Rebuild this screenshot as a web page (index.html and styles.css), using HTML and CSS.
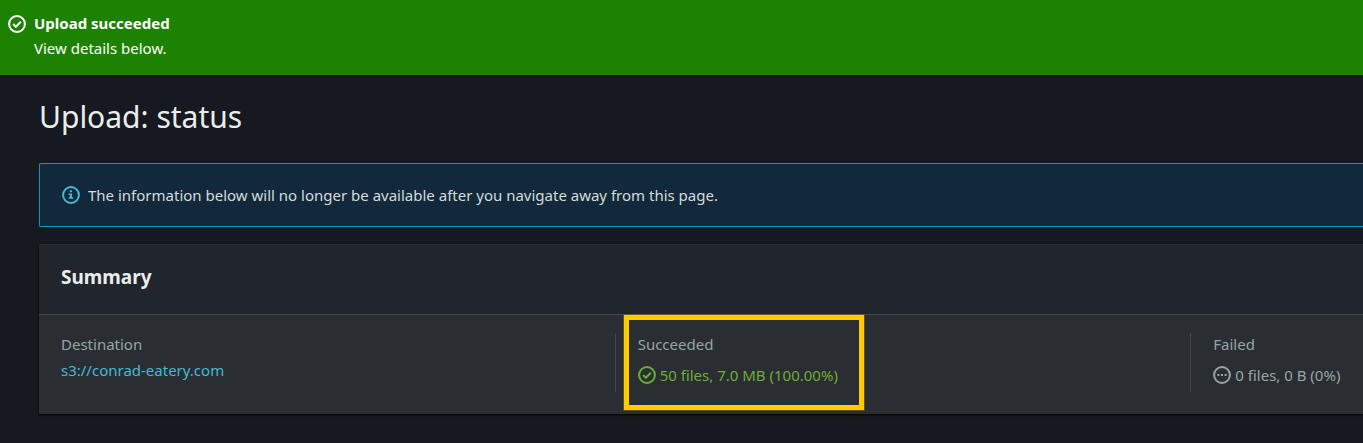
FILE: index.html
```html
<!DOCTYPE html>
<html lang="en">
<head>
<meta charset="utf-8">
<title>Upload: status</title>
<link rel="stylesheet" href="styles.css">
</head>
<body>
<div class="flash" role="status">
  <svg class="icon" viewBox="0 0 18 18" aria-hidden="true"><circle cx="9" cy="9" r="7.9"/><path d="M5.2 9l2.6 2.7 5-5"/></svg>
  <div class="flash-text">
    <strong class="flash-title">Upload succeeded</strong>
    <span>View details below.</span>
  </div>
</div>
<main class="content">
  <h1 class="page-title">Upload: status</h1>
  <div class="notice">
    <svg class="icon" viewBox="0 0 18 18" aria-hidden="true"><circle cx="9" cy="9" r="7.9"/><path class="solid" d="M7.8 4.2h2.2v2H7.8zM6.5 7.4h3.6v3.8h1.2v1.6H6.5v-1.6h1.4V9H6.5z"/></svg>
    <p class="notice-text">The information below will no longer be available after you navigate away from this page.</p>
  </div>
  <section class="panel">
    <header class="panel-header"><h2 class="panel-title">Summary</h2></header>
    <div class="columns">
      <div class="column">
        <div class="label">Destination</div>
        <a class="link" href="#">s3://conrad-eatery.com</a>
      </div>
      <div class="column">
        <div class="label">Succeeded</div>
        <div class="status success">
          <svg class="icon" viewBox="0 0 18 18" aria-hidden="true"><circle cx="9" cy="9" r="7.9"/><path d="M5.2 9l2.6 2.7 5-5"/></svg>
          <span>50 files, 7.0 MB (100.00%)</span>
        </div>
        <div class="highlight"></div>
      </div>
      <div class="column">
        <div class="label">Failed</div>
        <div class="status">
          <svg class="icon" viewBox="0 0 18 18" aria-hidden="true"><circle cx="9" cy="9" r="7.9"/><path class="solid" d="M4.4 8h2v2h-2zM8 8h2v2H8zM11.6 8h2v2h-2z"/></svg>
          <span>0 files, 0 B (0%)</span>
        </div>
      </div>
    </div>
  </section>
</main>
</body>
</html>
```
FILE: styles.css
```css
* {
  box-sizing: border-box;
}

body {
  margin: 0;
  background: #16191f;
  color: #d5dbdb;
  font: 15px/24px "Noto Sans", "Open Sans", sans-serif;
  overflow-x: hidden;
}

.icon {
  flex: none;
  width: 18px;
  height: 18px;
  fill: none;
  stroke: currentColor;
  stroke-width: 2;
}

.solid {
  fill: currentColor;
  stroke: none;
}

.flash {
  display: flex;
  gap: 8px;
  padding: 11px 8px 15px;
  background: #1d8102;
  color: #fff;
  box-shadow: 0 1px 1px #0d1016;
}

.flash .icon {
  margin-top: 4px;
}

.flash-text {
  display: flex;
  flex-direction: column;
  gap: 1px;
}

.content {
  padding: 22px 0 29px 39px;
}

.page-title {
  margin: 0 0 26px;
  color: #eaeded;
  font-size: 30px;
  font-weight: 400;
  line-height: 40px;
}

.notice {
  display: flex;
  align-items: center;
  gap: 8px;
  padding: 19px 22px;
  border: 1px solid #0099c8;
  border-right: 0;
  border-radius: 2px 0 0 2px;
  background: #12293b;
}

.notice .icon {
  color: #44b9d6;
}

.notice-text {
  margin: 0;
}

.panel {
  margin-top: 17px;
  border-top: 1px solid #2a2e33;
  background: #2a2e33;
  box-shadow: 0 1px 2px #000;
}

.panel-header {
  padding: 17px 22px 22px;
  border-bottom: 1px solid #414750;
  background: #21252c;
}

.panel-title {
  margin: 0;
  color: #eaeded;
  font-size: 19px;
  line-height: 30px;
}

.columns {
  display: grid;
  grid-template-columns: 10fr 10fr 3fr;
  padding: 18px 0 22px;
}

.column {
  position: relative;
  min-height: 59px;
  padding-left: 22px;
  white-space: nowrap;
}

.column + .column {
  border-left: 1px solid #414750;
}

.label,
.status {
  color: #95a5a6;
}

.label {
  line-height: 22px;
}

.link {
  display: block;
  margin-top: 3px;
  color: #44b9d6;
  text-decoration: none;
}

.status {
  display: flex;
  align-items: center;
  gap: 4px;
  margin-top: 8px;
}

.success {
  color: #6aaf35;
}

.highlight {
  position: absolute;
  top: -18px;
  left: 8px;
  width: 240px;
  height: 95px;
  border: 5px solid #ffcc00;
  box-shadow: 0 0 0 1px #8c761180;
}
```
